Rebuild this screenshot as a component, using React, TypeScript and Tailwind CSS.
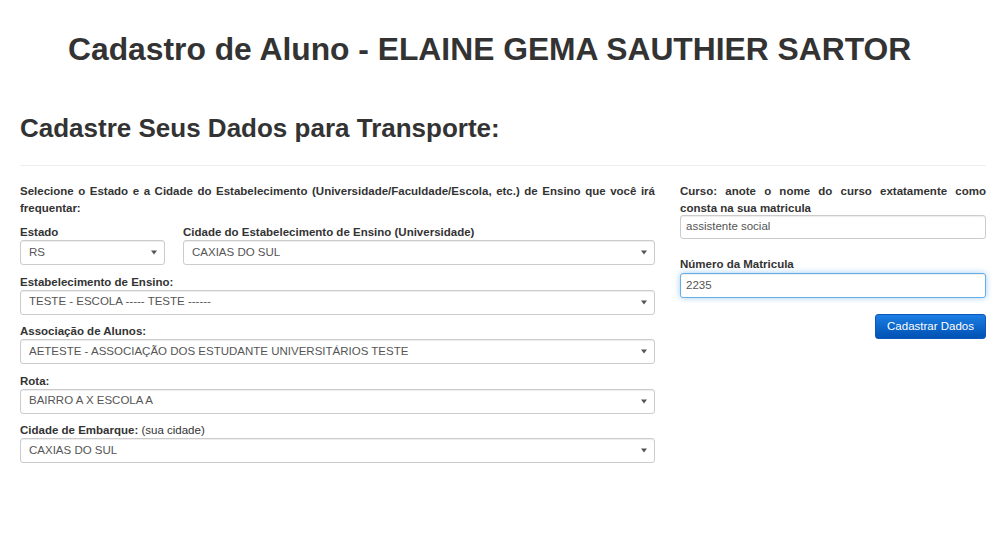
import React from "react";

const font = { fontFamily: '"Liberation Sans", Arial, Helvetica, sans-serif' };

function Arrow() {
  return (
    <svg width="6" height="5" viewBox="0 0 6 5" className="shrink-0">
      <path d="M0 0.5 H6 L3 4.5 Z" fill="#555" />
    </svg>
  );
}

function Select({ value }: { value: string }) {
  return (
    <div className="flex h-[25px] w-full items-center justify-between rounded-[3px] border border-[#ccc] bg-white pl-[8px] pr-[7px] text-[11.5px] text-[#555] shadow-[inset_0_1px_1px_rgba(0,0,0,0.075)]">
      <span className="truncate">{value}</span>
      <Arrow />
    </div>
  );
}

function Field({ label, extra, value }: { label: string; extra?: string; value: string }) {
  return (
    <div className="mb-[9.5px]">
      <div className="text-[11.5px] leading-[15px] font-bold text-[#333]">
        {label}
        {extra && <span className="font-normal"> {extra}</span>}
      </div>
      <Select value={value} />
    </div>
  );
}

export default function App() {
  return (
    <div className="min-h-[543px] w-[1007px] bg-white text-[#333]" style={font}>
      <h1 className="pt-[32px] pl-[68px] text-[31.8px] leading-[35px] font-bold text-[#333]">
        Cadastro de Aluno - ELAINE GEMA SAUTHIER SARTOR
      </h1>
      <div className="px-[20px] pr-[21px]">
        <h2 className="mt-[47px] text-[26px] leading-[29px] font-bold text-[#333]">
          Cadastre Seus Dados para Transporte:
        </h2>
        <div className="mt-[22px] h-px bg-[#eee]" />
        <div className="mt-[17px] flex gap-[25px]">
          <div className="w-[635px]">
            <p className="mb-[9px] text-justify text-[11.5px] leading-[16.5px] font-bold">
              Selecione o Estado e a Cidade do Estabelecimento (Universidade/Faculdade/Escola, etc.) de Ensino que você irá frequentar:
            </p>
            <div className="flex gap-[18px]">
              <div className="w-[145px]">
                <Field label="Estado" value="RS" />
              </div>
              <div className="flex-1">
                <Field label="Cidade do Estabelecimento de Ensino (Universidade)" value="CAXIAS DO SUL" />
              </div>
            </div>
            <Field label="Estabelecimento de Ensino:" value="TESTE - ESCOLA ----- TESTE ------" />
            <Field label="Associação de Alunos:" value="AETESTE - ASSOCIAÇÃO DOS ESTUDANTE UNIVERSITÁRIOS TESTE" />
            <Field label="Rota:" value="BAIRRO A X ESCOLA A" />
            <Field label="Cidade de Embarque:" extra="(sua cidade)" value="CAXIAS DO SUL" />
          </div>
          <div className="flex-1">
            <p className="text-justify text-[11.5px] leading-[16.5px] font-bold">
              Curso: anote o nome do curso extatamente como consta na sua matricula
            </p>
            <div className="mt-[-1px] flex h-[24px] items-center rounded-[3px] border border-[#ccc] bg-white pl-[5px] text-[11.5px] text-[#555] shadow-[inset_0_1px_1px_rgba(0,0,0,0.075)]">
              assistente social
            </div>
            <div className="mt-[18px] text-[11.5px] leading-[15px] font-bold">Número da Matricula</div>
            <div className="mt-[1px] flex h-[25px] items-center rounded-[3px] border border-[#66afe9] bg-white pl-[5px] text-[11.5px] text-[#555] shadow-[inset_0_1px_1px_rgba(0,0,0,0.075),0_0_6px_rgba(102,175,233,0.6)]">
              2235
            </div>
            <div className="mt-[16px] flex justify-end">
              <button className="h-[25px] rounded-[3px] border border-[#0a58b8] bg-gradient-to-b from-[#1c7ee3] to-[#0152b3] px-[11px] text-[11.5px] text-white">
                Cadastrar Dados
              </button>
            </div>
          </div>
        </div>
      </div>
    </div>
  );
}
